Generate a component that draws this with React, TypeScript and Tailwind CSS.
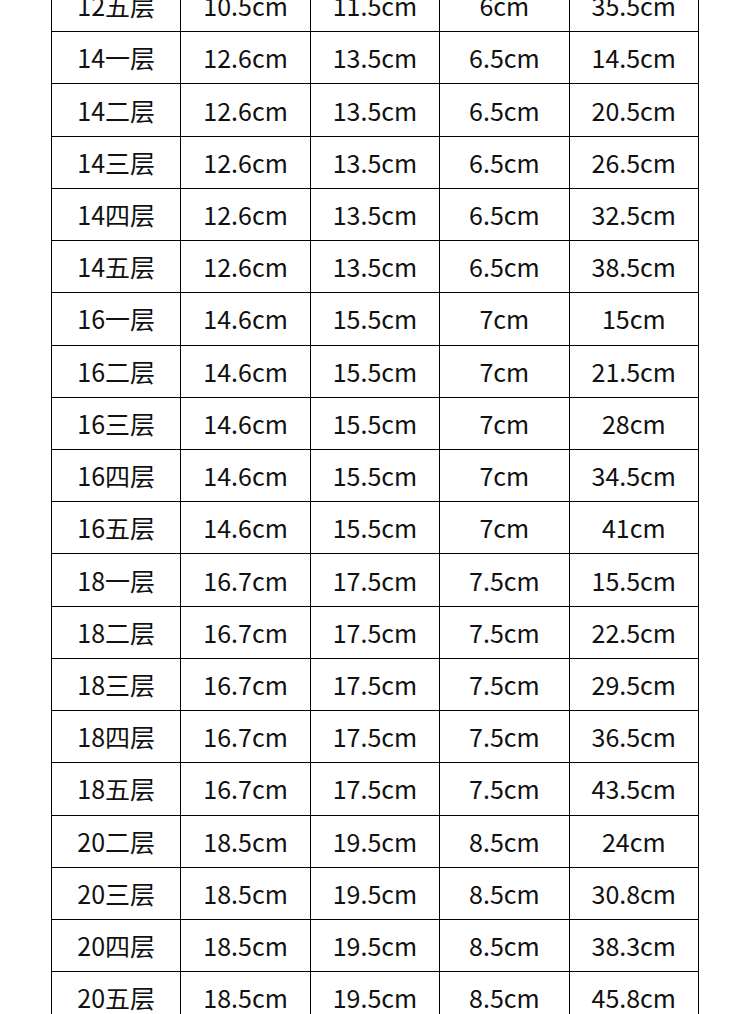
const rows: string[][] = [
  ["12五层", "10.5cm", "11.5cm", "6cm", "35.5cm"],
  ["14一层", "12.6cm", "13.5cm", "6.5cm", "14.5cm"],
  ["14二层", "12.6cm", "13.5cm", "6.5cm", "20.5cm"],
  ["14三层", "12.6cm", "13.5cm", "6.5cm", "26.5cm"],
  ["14四层", "12.6cm", "13.5cm", "6.5cm", "32.5cm"],
  ["14五层", "12.6cm", "13.5cm", "6.5cm", "38.5cm"],
  ["16一层", "14.6cm", "15.5cm", "7cm", "15cm"],
  ["16二层", "14.6cm", "15.5cm", "7cm", "21.5cm"],
  ["16三层", "14.6cm", "15.5cm", "7cm", "28cm"],
  ["16四层", "14.6cm", "15.5cm", "7cm", "34.5cm"],
  ["16五层", "14.6cm", "15.5cm", "7cm", "41cm"],
  ["18一层", "16.7cm", "17.5cm", "7.5cm", "15.5cm"],
  ["18二层", "16.7cm", "17.5cm", "7.5cm", "22.5cm"],
  ["18三层", "16.7cm", "17.5cm", "7.5cm", "29.5cm"],
  ["18四层", "16.7cm", "17.5cm", "7.5cm", "36.5cm"],
  ["18五层", "16.7cm", "17.5cm", "7.5cm", "43.5cm"],
  ["20二层", "18.5cm", "19.5cm", "8.5cm", "24cm"],
  ["20三层", "18.5cm", "19.5cm", "8.5cm", "30.8cm"],
  ["20四层", "18.5cm", "19.5cm", "8.5cm", "38.3cm"],
  ["20五层", "18.5cm", "19.5cm", "8.5cm", "45.8cm"],
];

const App = () => {
  return (
    <div className="w-[750px] h-[1014px] overflow-hidden bg-white">
      <div className="pl-[51px] -mt-[21px]">
        <table
          className="w-[648px] border-collapse table-fixed text-[25px] text-[#111]"
          style={{ fontFamily: '"Noto Sans CJK SC", "Noto Sans", sans-serif' }}
        >
          <tbody>
            {rows.map((row, i) => (
              <tr key={i} className="h-[52.22px]">
                {row.map((cell, j) => (
                  <td key={j} className="border border-black text-center align-middle p-0 leading-none">
                    {cell}
                  </td>
                ))}
              </tr>
            ))}
          </tbody>
        </table>
      </div>
    </div>
  );
};

export default App;
